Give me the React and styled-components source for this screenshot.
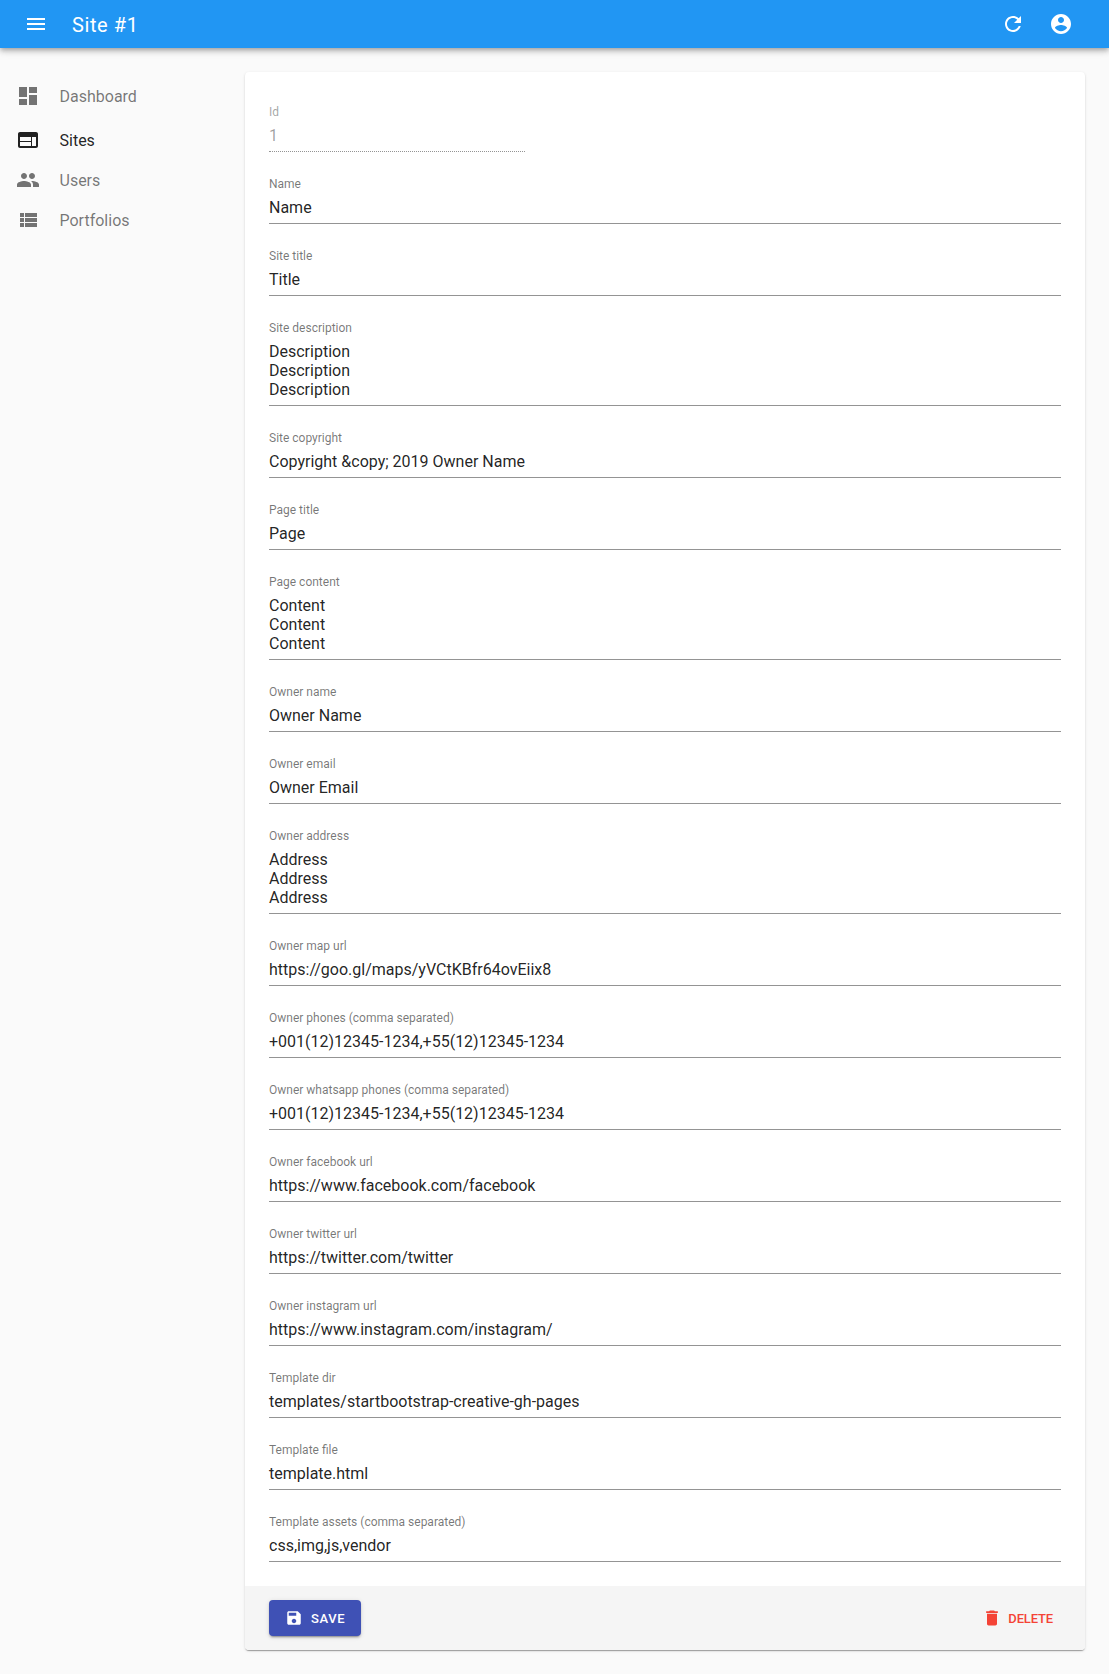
import React from "react";
import styled, { createGlobalStyle } from "styled-components";

const Global = createGlobalStyle`
  html, body { margin: 0; padding: 0; background: #fafafa; }
  body { font-family: Roboto, "Liberation Sans", sans-serif; }
  * { box-sizing: border-box; }
`;

const Page = styled.div`
  width: 1109px;
  min-height: 1674px;
  display: flex;
  flex-direction: column;
  background: #fafafa;
`;
const AppBar = styled.header`
  position: relative;
  z-index: 2;
  height: 48px;
  display: flex;
  align-items: center;
  padding: 0 24px;
  background: #2196f3;
  color: #fff;
  box-shadow: 0 2px 4px -1px rgba(0,0,0,.2), 0 4px 5px 0 rgba(0,0,0,.14), 0 1px 10px 0 rgba(0,0,0,.12);
`;
const Burger = styled.span`
  display: flex;
  width: 48px;
`;
const Title = styled.h1`
  flex: 1;
  margin: 0;
  padding-top: 1px;
  font-size: 20px;
  font-weight: 400;
  line-height: 1.6;
  letter-spacing: .6px;
`;
const BarButton = styled.span`
  width: 48px;
  height: 48px;
  display: flex;
  align-items: center;
  justify-content: center;
`;
const Body = styled.div`
  flex: 1;
  display: flex;
`;
const Sidebar = styled.nav`
  width: 245px;
  flex: none;
  padding: 24px 0 0 16px;
`;
const MenuItem = styled.div`
  height: ${p => (p.$first ? 48 : 40)}px;
  display: flex;
  align-items: center;
  gap: 19.5px;
  font-size: 16px;
  color: ${p => (p.$active ? "rgba(0,0,0,.87)" : "rgba(0,0,0,.54)")};
  svg { color: ${p => (p.$active ? "rgba(0,0,0,.87)" : "rgba(0,0,0,.54)")}; }
`;
const MenuLabel = styled.span`
  padding-top: 1px;
`;
const Main = styled.main`
  flex: 1;
  padding: 24px 24px 24px 0;
`;
const Card = styled.div`
  background: #fff;
  border-radius: 4px;
  overflow: hidden;
  box-shadow: 0 2px 1px -1px rgba(0,0,0,.2), 0 1px 1px 0 rgba(0,0,0,.14), 0 1px 3px 0 rgba(0,0,0,.12);
`;
const Form = styled.form`
  padding: 16px 24px;
  display: flex;
  flex-direction: column;
`;
const Field = styled.div`
  margin: 16px 0 8px;
  width: ${p => (p.$short ? "256px" : "100%")};
`;
const Label = styled.label`
  display: block;
  height: 16px;
  font-size: 12px;
  line-height: 17px;
  color: ${p => (p.$disabled ? "rgba(0,0,0,.38)" : "rgba(0,0,0,.54)")};
`;
const Value = styled.div`
  padding: 6px 0 6px;
  font-size: 16px;
  line-height: 19px;
  white-space: pre-line;
  color: ${p => (p.$disabled ? "rgba(0,0,0,.38)" : "rgba(0,0,0,.87)")};
  border-bottom: 1px ${p => (p.$disabled ? "dotted" : "solid")} rgba(0,0,0,.42);
`;
const Toolbar = styled.div`
  height: 64px;
  padding: 0 24px;
  display: flex;
  align-items: center;
  justify-content: space-between;
  background: #f5f5f5;
`;
const SaveButton = styled.button`
  height: 36px;
  padding: 0 16px;
  display: flex;
  align-items: center;
  gap: 8px;
  border: 0;
  border-radius: 4px;
  background: #3f51b5;
  color: #fff;
  font: 500 13px/1 Roboto, sans-serif;
  letter-spacing: .65px;
  box-shadow: 0 3px 1px -2px rgba(0,0,0,.2), 0 2px 2px 0 rgba(0,0,0,.14), 0 1px 5px 0 rgba(0,0,0,.12);
`;
const DeleteButton = styled.button`
  height: 36px;
  padding: 0 8px 0 0;
  display: flex;
  align-items: center;
  gap: 6px;
  border: 0;
  background: none;
  color: #f44336;
  font: 500 13px/1 Roboto, sans-serif;
  letter-spacing: -.15px;
`;

const Icon = ({ d, size = 24 }) => (
  <svg width={size} height={size} viewBox="0 0 24 24" fill="currentColor" style={{ flex: "none" }}>
    <path d={d} />
  </svg>
);

const icons = {
  menu: "M3 18h18v-2H3v2zm0-5h18v-2H3v2zm0-7v2h18V6H3z",
  refresh: "M17.65 6.35C16.2 4.9 14.21 4 12 4c-4.42 0-7.99 3.58-7.99 8s3.57 8 7.99 8c3.73 0 6.84-2.55 7.73-6h-2.08c-.82 2.33-3.04 4-5.65 4-3.31 0-6-2.69-6-6s2.69-6 6-6c1.66 0 3.14.69 4.22 1.78L13 11h7V4l-2.35 2.35z",
  account: "M12 2C6.48 2 2 6.48 2 12s4.48 10 10 10 10-4.48 10-10S17.52 2 12 2zm0 3c1.66 0 3 1.34 3 3s-1.34 3-3 3-3-1.34-3-3 1.34-3 3-3zm0 14.2c-2.5 0-4.71-1.28-6-3.22.03-1.99 4-3.08 6-3.08 1.99 0 5.97 1.09 6 3.08-1.29 1.94-3.5 3.22-6 3.22z",
  dashboard: "M3 13h8V3H3v10zm0 8h8v-6H3v6zm10 0h8V11h-8v10zm0-18v6h8V3h-8z",
  web: "M20 4H4c-1.1 0-1.99.9-1.99 2L2 18c0 1.1.9 2 2 2h16c1.1 0 2-.9 2-2V6c0-1.1-.9-2-2-2zm-5 14H4v-4h11v4zm0-5H4V9h11v4zm5 5h-4V9h4v9z",
  people: "M16 11c1.66 0 2.99-1.34 2.99-3S17.66 5 16 5c-1.66 0-3 1.34-3 3s1.34 3 3 3zm-8 0c1.66 0 2.99-1.34 2.99-3S9.66 5 8 5C6.34 5 5 6.34 5 8s1.34 3 3 3zm0 2c-2.33 0-7 1.17-7 3.5V19h14v-2.5c0-2.33-4.67-3.5-7-3.5zm8 0c-.29 0-.62.02-.97.05 1.16.84 1.97 1.97 1.97 3.45V19h6v-2.5c0-2.33-4.67-3.5-7-3.5z",
  list: "M4 14h4v-4H4v4zm0 5h4v-4H4v4zm0-10h4V5H4v4zm5 5h12v-4H9v4zm0 5h12v-4H9v4zM9 5v4h12V5H9z",
  save: "M17 3H5c-1.11 0-2 .9-2 2v14c0 1.1.89 2 2 2h14c1.1 0 2-.9 2-2V7l-4-4zm-5 16c-1.66 0-3-1.34-3-3s1.34-3 3-3 3 1.34 3 3-1.34 3-3 3zm3-10H5V5h10v4z",
  trash: "M6 19c0 1.1.9 2 2 2h8c1.1 0 2-.9 2-2V7H6v12zM19 4h-3.5l-1-1h-5l-1 1H5v2h14V4z",
};

const menu = [
  { label: "Dashboard", icon: icons.dashboard, first: true },
  { label: "Sites", icon: icons.web, active: true },
  { label: "Users", icon: icons.people },
  { label: "Portfolios", icon: icons.list },
];

const fields = [
  ["Name", "Name"],
  ["Site title", "Title"],
  ["Site description", "Description\nDescription\nDescription"],
  ["Site copyright", "Copyright &copy; 2019 Owner Name"],
  ["Page title", "Page"],
  ["Page content", "Content\nContent\nContent"],
  ["Owner name", "Owner Name"],
  ["Owner email", "Owner Email"],
  ["Owner address", "Address\nAddress\nAddress"],
  ["Owner map url", "https://goo.gl/maps/yVCtKBfr64ovEiix8"],
  ["Owner phones (comma separated)", "+001(12)12345-1234,+55(12)12345-1234"],
  ["Owner whatsapp phones (comma separated)", "+001(12)12345-1234,+55(12)12345-1234"],
  ["Owner facebook url", "https://www.facebook.com/facebook"],
  ["Owner twitter url", "https://twitter.com/twitter"],
  ["Owner instagram url", "https://www.instagram.com/instagram/"],
  ["Template dir", "templates/startbootstrap-creative-gh-pages"],
  ["Template file", "template.html"],
  ["Template assets (comma separated)", "css,img,js,vendor"],
];

export default function App() {
  return (
    <Page>
      <Global />
      <AppBar>
        <Burger><Icon d={icons.menu} /></Burger>
        <Title>Site #1</Title>
        <BarButton><Icon d={icons.refresh} /></BarButton>
        <BarButton><Icon d={icons.account} /></BarButton>
      </AppBar>
      <Body>
        <Sidebar>
          {menu.map(m => (
            <MenuItem key={m.label} $first={m.first} $active={m.active}>
              <Icon d={m.icon} />
              <MenuLabel>{m.label}</MenuLabel>
            </MenuItem>
          ))}
        </Sidebar>
        <Main>
          <Card>
            <Form>
              <Field $short>
                <Label $disabled>Id</Label>
                <Value $disabled>1</Value>
              </Field>
              {fields.map(([label, value]) => (
                <Field key={label}>
                  <Label>{label}</Label>
                  <Value>{value}</Value>
                </Field>
              ))}
            </Form>
            <Toolbar>
              <SaveButton type="button"><Icon d={icons.save} size={18} />SAVE</SaveButton>
              <DeleteButton type="button"><Icon d={icons.trash} size={20} />DELETE</DeleteButton>
            </Toolbar>
          </Card>
        </Main>
      </Body>
    </Page>
  );
}
